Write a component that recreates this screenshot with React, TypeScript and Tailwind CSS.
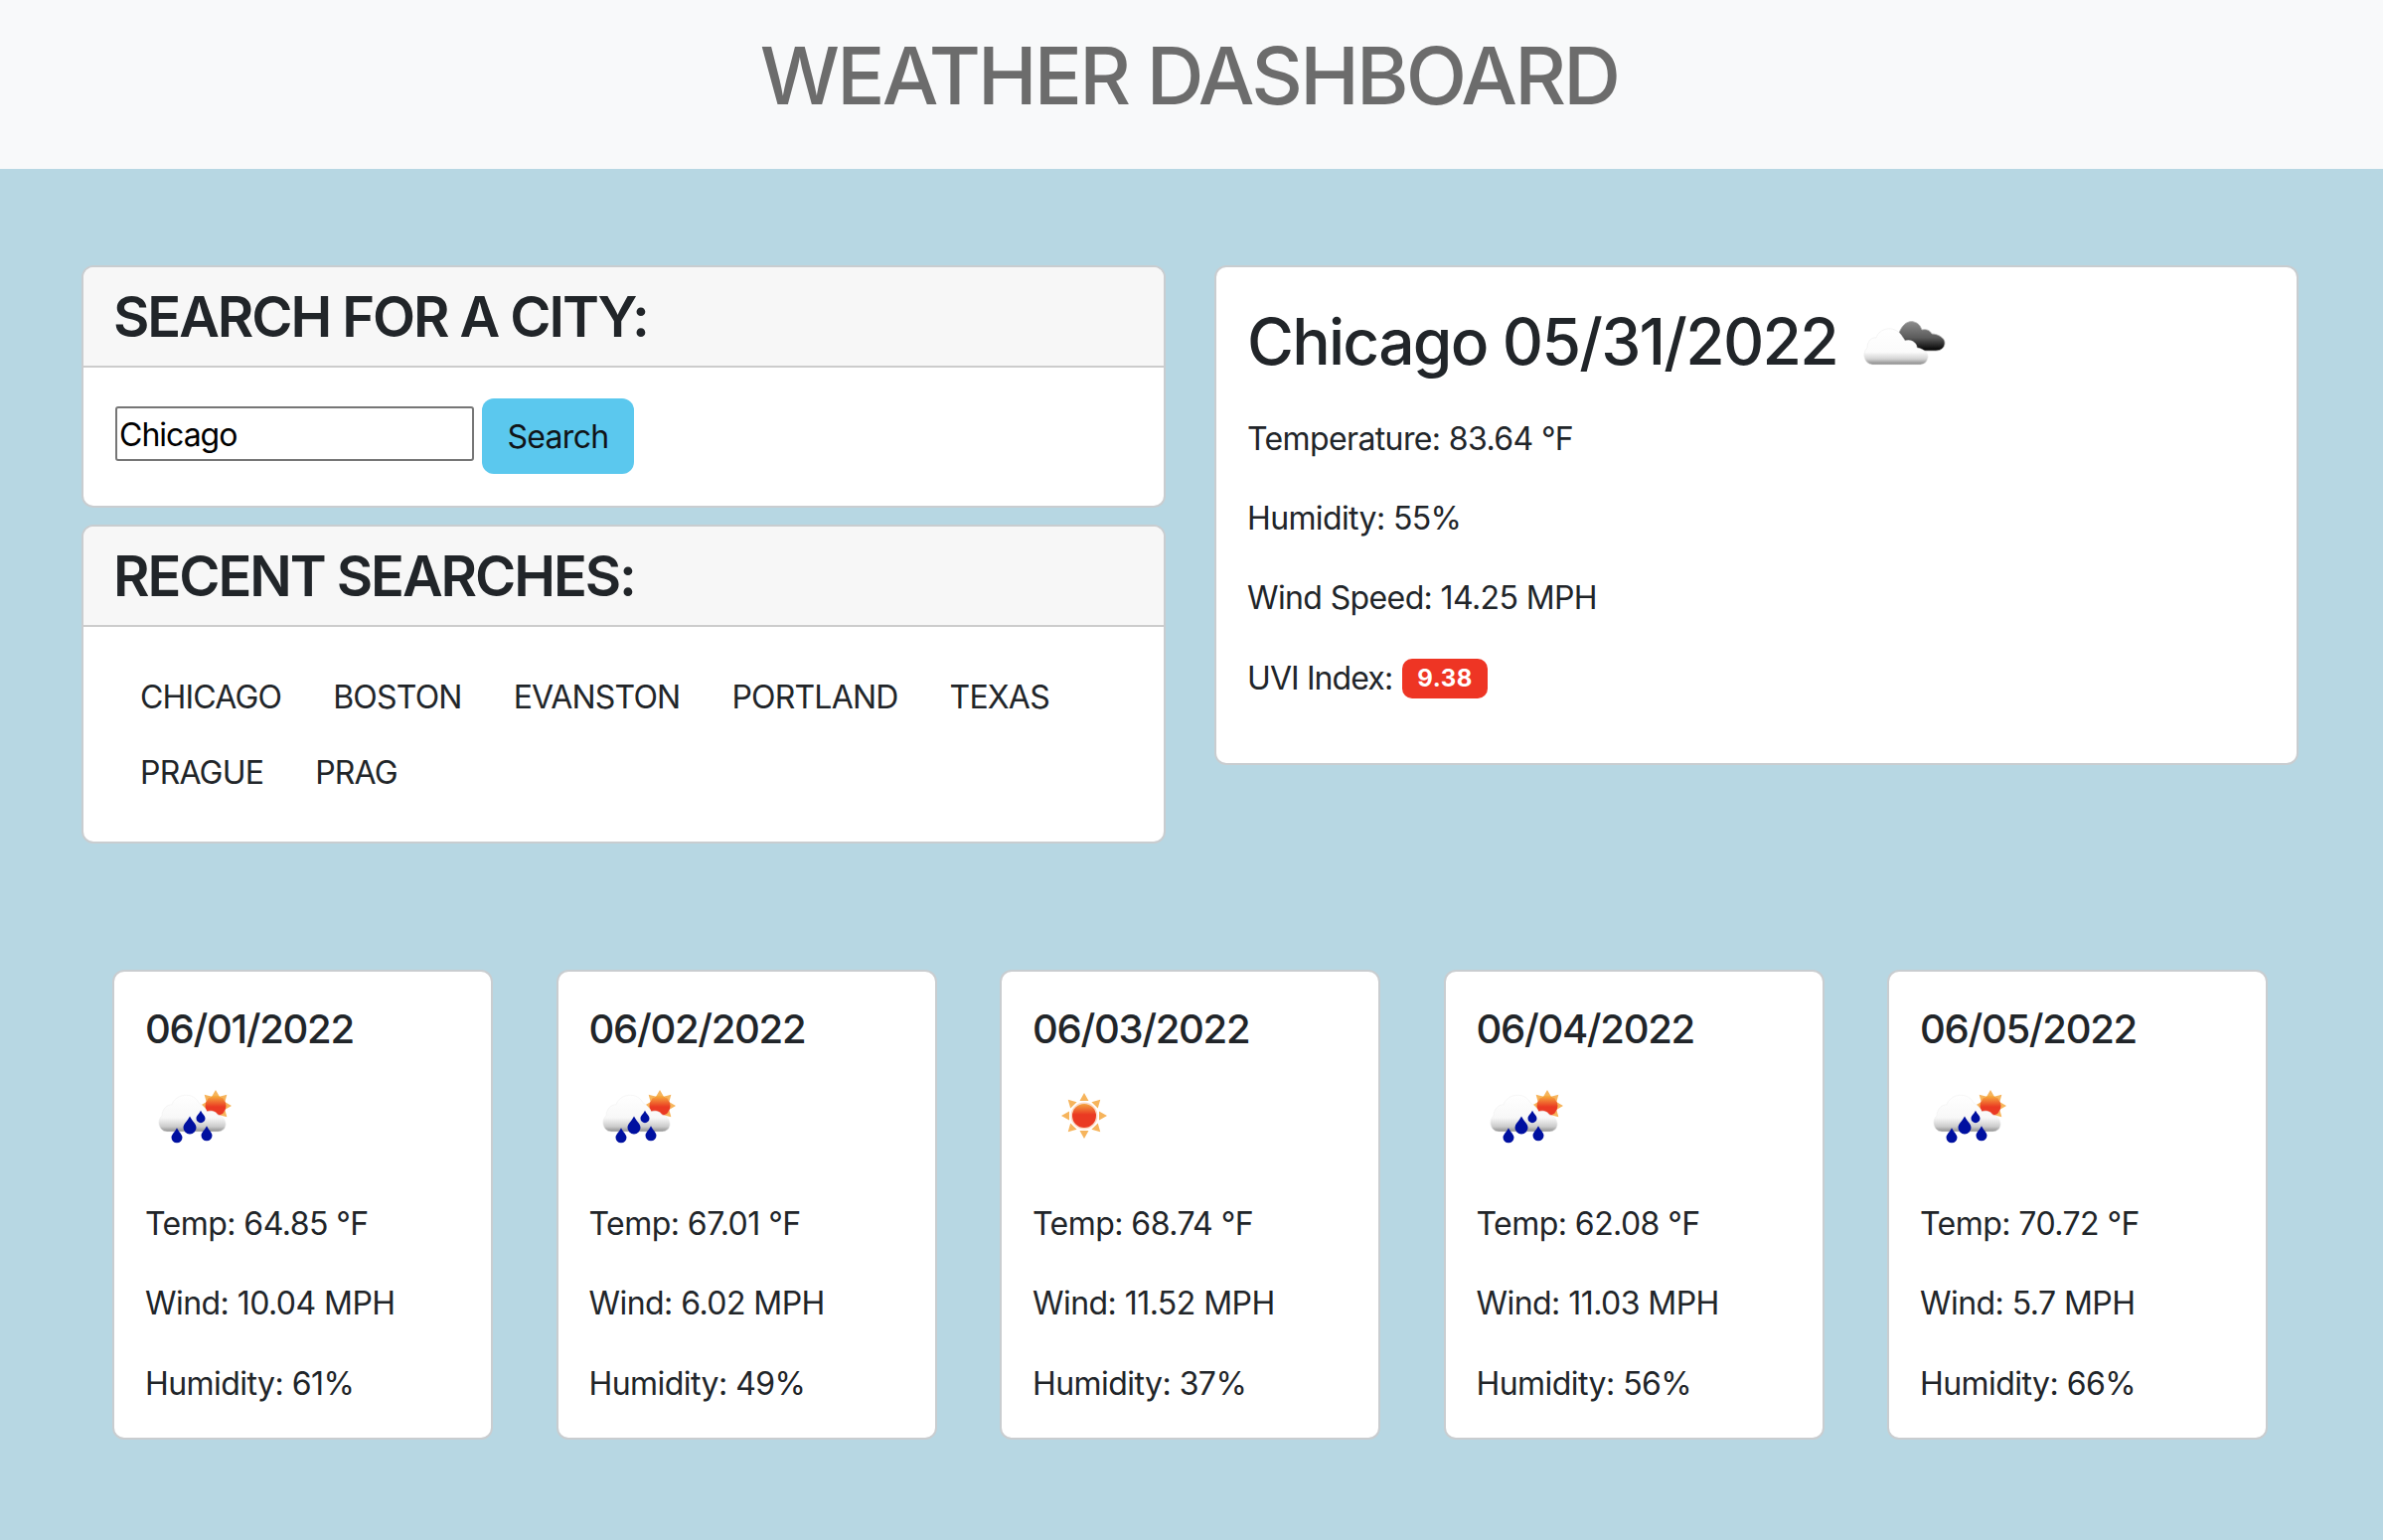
import React from 'react'

const recent = ['CHICAGO', 'BOSTON', 'EVANSTON', 'PORTLAND', 'TEXAS', 'PRAGUE', 'PRAG']

const forecast = [
  { date: '06/01/2022', icon: 'rain', temp: '64.85', wind: '10.04', humidity: '61' },
  { date: '06/02/2022', icon: 'rain', temp: '67.01', wind: '6.02', humidity: '49' },
  { date: '06/03/2022', icon: 'sun', temp: '68.74', wind: '11.52', humidity: '37' },
  { date: '06/04/2022', icon: 'rain', temp: '62.08', wind: '11.03', humidity: '56' },
  { date: '06/05/2022', icon: 'rain', temp: '70.72', wind: '5.7', humidity: '66' },
]

const RAYS = [0, 45, 90, 135, 180, 225, 270, 315]

function SunRays({ cx, cy, inner, outer, width }: { cx: number; cy: number; inner: number; outer: number; width: number }) {
  return (
    <>
      {RAYS.map((a) => (
        <polygon
          key={a}
          points={`${cx - width},${cy - inner} ${cx + width},${cy - inner} ${cx},${cy - outer}`}
          fill="#f6b45c"
          transform={`rotate(${a} ${cx} ${cy})`}
        />
      ))}
    </>
  )
}

function Drop({ x, y, s }: { x: number; y: number; s: number }) {
  return (
    <path
      d={`M${x} ${y - s * 1.6} C${x + s * 0.4} ${y - s * 0.8} ${x + s} ${y - s * 0.4} ${x + s} ${y + s * 0.15} A${s} ${s} 0 0 1 ${x - s} ${y + s * 0.15} C${x - s} ${y - s * 0.4} ${x - s * 0.4} ${y - s * 0.8} ${x} ${y - s * 1.6}Z`}
      fill="#0010a0"
    />
  )
}

function RainIcon() {
  return (
    <svg width="100" height="100" viewBox="0 0 100 100" className="blur-[0.7px]">
      <defs>
        <linearGradient id="rainCloud" x1="0" y1="0" x2="0" y2="1">
          <stop offset="0" stopColor="#ffffff" />
          <stop offset="0.62" stopColor="#f8f8f8" />
          <stop offset="0.86" stopColor="#cccccc" />
          <stop offset="1" stopColor="#8e8e8e" />
        </linearGradient>
        <linearGradient id="rainSun" x1="0" y1="0" x2="0" y2="1">
          <stop offset="0" stopColor="#f7b23f" />
          <stop offset="0.55" stopColor="#ea3a23" />
        </linearGradient>
      </defs>
      <SunRays cx={69} cy={40} inner={10} outer={16} width={3.5} />
      <circle cx={69} cy={40} r={10.5} fill="url(#rainSun)" />
      <path
        d="M20 66 C12 66 9 55 15 50 C15 43 21 38 25 39 C28 28 46 25 52 37 C56 39 60 44 60 46 C64 44 70 46 71 49 C76 50 80 55 79 60 C78 64 75 66 70 66 Z"
        fill="url(#rainCloud)"
        stroke="#f0f0f0"
        strokeWidth="0.6"
      />
      <Drop x={30} y={71} s={5.5} />
      <Drop x={43} y={61} s={6.5} />
      <Drop x={54} y={52} s={4.5} />
      <Drop x={60} y={69} s={5.5} />
    </svg>
  )
}

function SunIcon() {
  return (
    <svg width="100" height="100" viewBox="0 0 100 100" className="blur-[0.7px]">
      <defs>
        <linearGradient id="sunCore" x1="0" y1="0" x2="0" y2="1">
          <stop offset="0" stopColor="#f4a33f" />
          <stop offset="0.45" stopColor="#ea3a23" />
        </linearGradient>
      </defs>
      <SunRays cx={50} cy={50} inner={15} outer={23} width={4.5} />
      <circle cx={50} cy={50} r={13.5} fill="#fbd9c4" />
      <circle cx={50} cy={50} r={12} fill="url(#sunCore)" />
    </svg>
  )
}

function CloudIcon() {
  return (
    <svg width="100" height="100" viewBox="0 0 100 100" className="blur-[0.6px]">
      <defs>
        <linearGradient id="darkCloud" x1="0" y1="0" x2="0" y2="1">
          <stop offset="0" stopColor="#8c8c8c" />
          <stop offset="0.55" stopColor="#5c5c5c" />
          <stop offset="1" stopColor="#000000" />
        </linearGradient>
        <linearGradient id="whiteCloud" x1="0" y1="0" x2="0" y2="1">
          <stop offset="0" stopColor="#ffffff" />
          <stop offset="0.65" stopColor="#fbfbfb" />
          <stop offset="0.84" stopColor="#d4d4d4" />
          <stop offset="1" stopColor="#868686" />
        </linearGradient>
      </defs>
      <path
        d="M44 44 C47 33 54 28 60 30 C64 31 66 33 68 38 C72 37 76 38 78 42 C84 42 91 46 91 51 C91 56 87 59 82 59 L60 59 Z"
        fill="url(#darkCloud)"
        stroke="#b0b0b0"
        strokeWidth="0.8"
      />
      <path
        d="M18 73 C10 72 7 62 13 56 C13 49 18 45 22 46 C25 36 40 33 47 43 C49 46 50 47 51 49 C57 47 63 51 63 56 C70 57 75 62 74 66 C73 71 70 73 65 73 Z"
        fill="url(#whiteCloud)"
        stroke="#ececec"
        strokeWidth="0.6"
      />
    </svg>
  )
}

export default function App() {
  return (
    <div className="min-h-screen bg-[#b7d7e3] font-['Inter',sans-serif] text-[32px] leading-[48px] text-[#212529]">
      <header className="h-[170px] bg-[#f8f9fa] pt-[30px] pr-[5px] text-center">
        <h1 className="text-[80px] leading-[92px] font-medium tracking-[-2.8px] text-[#6c6c6c]">WEATHER DASHBOARD</h1>
      </header>

      <main className="pt-[97px]">
        <div className="flex items-start gap-[49px] pl-[82px]">
          <div className="flex w-[1091px] flex-col gap-[17px]">
            <section className="overflow-hidden rounded-[12px] border-2 border-[#c9cdd0] bg-white">
              <h2 className="border-b-2 border-[#cccccc] bg-[#f7f7f7] px-[30px] pt-[17px] pb-[15px] text-[56px] leading-[67px] font-semibold tracking-[-2.07px]">
                SEARCH FOR A CITY:
              </h2>
              <div className="flex h-[139px] items-start gap-[8px] px-[32px] pt-[31px]">
                <input
                  defaultValue="Chicago"
                  className="mt-[8px] h-[55px] w-[361px] rounded-[3px] border-2 border-[#767676] bg-white px-[2px] pt-[2px] font-['Inter',sans-serif] text-[32px] tracking-[-1px] text-black outline-none"
                />
                <button className="h-[76px] w-[153px] rounded-[12px] bg-[#5bc8ee] pt-[1px] text-[32px] tracking-[-0.7px] text-[#101418]">Search</button>
              </div>
            </section>

            <section className="overflow-hidden rounded-[12px] border-2 border-[#c9cdd0] bg-white">
              <h2 className="border-b-2 border-[#cccccc] bg-[#f7f7f7] px-[30px] pt-[17px] pb-[15px] text-[56px] leading-[67px] font-semibold tracking-[-2.07px]">
                RECENT SEARCHES:
              </h2>
              <ul className="flex h-[216px] flex-wrap content-start pt-[33px] pl-[31px]">
                {recent.map((city) => (
                  <li key={city} className="px-[26px] py-[14px] tracking-[-0.8px]">
                    {city}
                  </li>
                ))}
              </ul>
            </section>
          </div>

          <section className="h-[503px] w-[1091px] rounded-[12px] border-2 border-[#c9cdd0] bg-white px-[31px] pt-[32px]">
            <div className="mb-[31px] flex h-[86px] items-center">
              <h2 className="text-[64px] leading-[76px] font-medium tracking-[-1.75px]">Chicago 05/31/2022</h2>
              <div className="ml-[17px] h-[100px] w-[100px] shrink-0">
                <CloudIcon />
              </div>
            </div>
            <p className="mb-[32px] tracking-[-0.62px]">Temperature: 83.64 °F</p>
            <p className="mb-[32px] tracking-[-0.62px]">Humidity: 55%</p>
            <p className="mb-[33px] tracking-[-0.62px]">Wind Speed: 14.25 MPH</p>
            <p className="flex items-center tracking-[-0.9px]">
              UVI Index:
              <span className="ml-[10px] rounded-[10px] bg-[#ee3524] px-[15px] py-[7px] text-[24px] leading-[26px] font-bold tracking-[0.6px] text-white">9.38</span>
            </p>
          </section>
        </div>

        <div className="mt-[127px] flex gap-[63.5px] pl-[113px]">
          {forecast.map((day) => (
            <article key={day.date} className="h-[473px] w-[383px] rounded-[12px] border-2 border-[#c9cdd0] bg-white px-[31px] pt-[34px]">
              <h3 className="text-[40px] leading-[48px] font-medium tracking-[-1.3px]">{day.date}</h3>
              <div className="mt-[13px] mb-[35px] ml-[2px] h-[100px] w-[100px]">{day.icon === 'sun' ? <SunIcon /> : <RainIcon />}</div>
              <p className="mb-[32px] tracking-[-0.55px]">Temp: {day.temp} °F</p>
              <p className="mb-[32.5px] tracking-[-0.55px]">Wind: {day.wind} MPH</p>
              <p className="tracking-[-0.55px]">Humidity: {day.humidity}%</p>
            </article>
          ))}
        </div>
      </main>
    </div>
  )
}
